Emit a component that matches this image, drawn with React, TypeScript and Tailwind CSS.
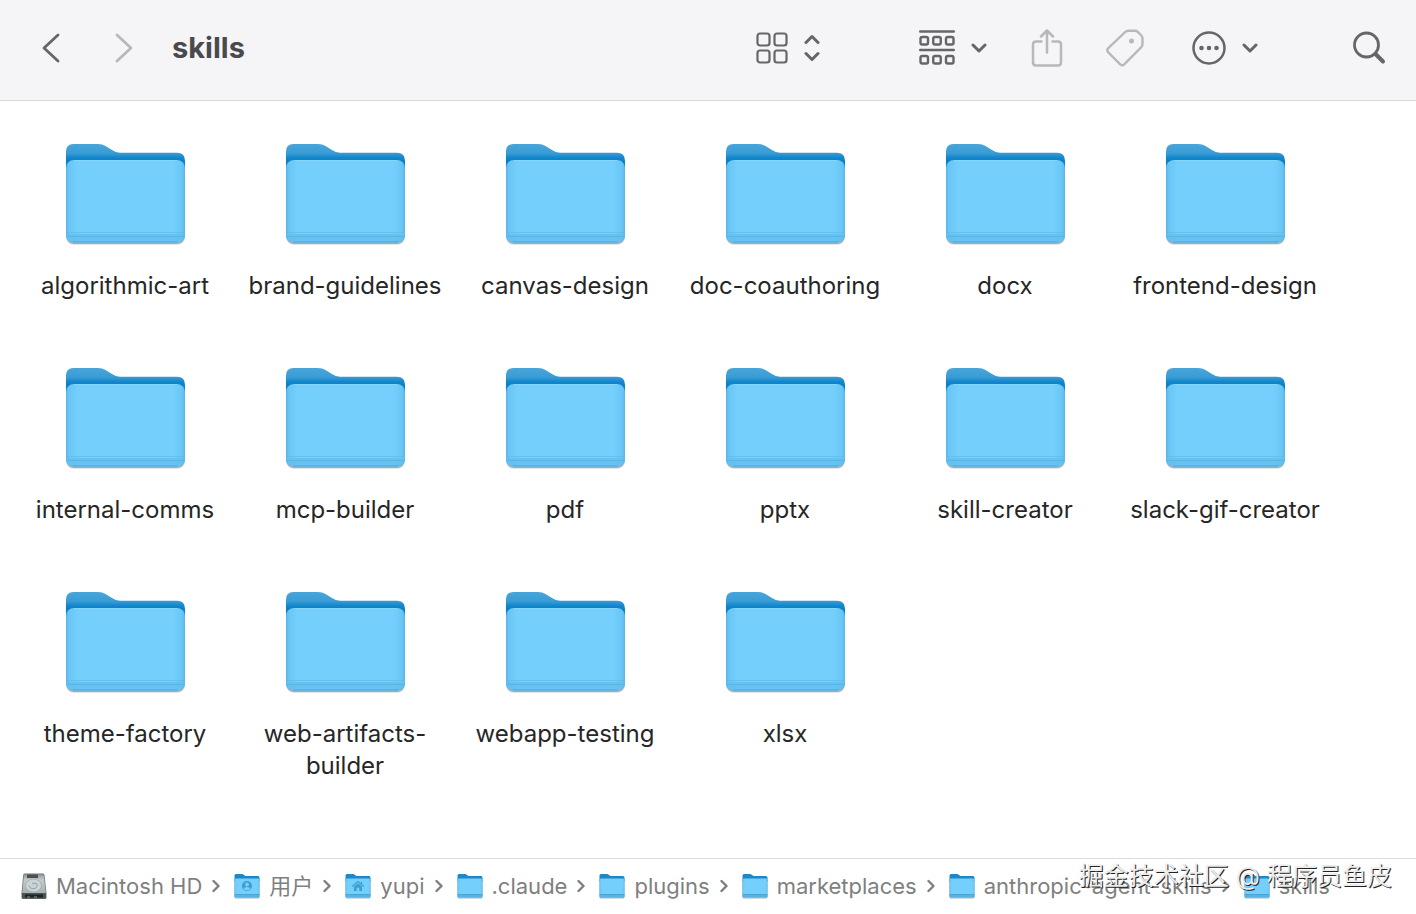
import { ReactNode } from "react";

const folders = [
  "algorithmic-art",
  "brand-guidelines",
  "canvas-design",
  "doc-coauthoring",
  "docx",
  "frontend-design",
  "internal-comms",
  "mcp-builder",
  "pdf",
  "pptx",
  "skill-creator",
  "slack-gif-creator",
  "theme-factory",
  "web-artifacts-builder",
  "webapp-testing",
  "xlsx",
];

type Crumb = { name: string; icon: "drive" | "users" | "home" | "folder" };

const path: Crumb[] = [
  { name: "Macintosh HD", icon: "drive" },
  { name: "用户", icon: "users" },
  { name: "yupi", icon: "home" },
  { name: ".claude", icon: "folder" },
  { name: "plugins", icon: "folder" },
  { name: "marketplaces", icon: "folder" },
  { name: "anthropic-agent-skills", icon: "folder" },
  { name: "skills", icon: "folder" },
];

function Gradients() {
  return (
    <svg className="absolute h-0 w-0" aria-hidden="true">
      <defs>
        <linearGradient id="back" x1="0" y1="0" x2="0" y2="18" gradientUnits="userSpaceOnUse">
          <stop offset="0" stopColor="#4aa6da" />
          <stop offset="0.55" stopColor="#3a9dd6" />
          <stop offset="0.8" stopColor="#1488cb" />
          <stop offset="1" stopColor="#0a80c6" />
        </linearGradient>
        <linearGradient id="sides" x1="0" y1="0" x2="1" y2="0">
          <stop offset="0" stopColor="#58b6e8" />
          <stop offset="0.025" stopColor="#6ac6f5" />
          <stop offset="0.1" stopColor="#74cffc" />
          <stop offset="0.9" stopColor="#74cffc" />
          <stop offset="0.975" stopColor="#6ac6f5" />
          <stop offset="1" stopColor="#58b6e8" />
        </linearGradient>
        <linearGradient id="drive" x1="0" y1="0" x2="0" y2="1">
          <stop offset="0" stopColor="#8d9294" />
          <stop offset="0.3" stopColor="#c3cbcd" />
          <stop offset="1" stopColor="#a7b0b2" />
        </linearGradient>
      </defs>
    </svg>
  );
}

function Folder() {
  return (
    <svg viewBox="2 0 122 106" className="h-[106px] w-[122px]" aria-hidden="true">
      <rect x="4" y="20" width="119" height="82" rx="8" fill="#000" opacity="0.1" />
      <rect x="4" y="20" width="119" height="81" rx="8" fill="#4a6a80" opacity="0.45" />
      <path
        d="M4 88V8.500Q4 1 11.500 1H36Q40.500 1 43.500 3L50 7Q54 9.800 58 9.800H115Q123 9.800 123 18V88Z"
        fill="url(#back)"
      />
      <rect x="4" y="17" width="119" height="82.500" rx="8" fill="url(#sides)" />
      <path d="M4 91H123V91.500Q123 99.500 115 99.500H12Q4 99.500 4 91.500Z" fill="#62bdec" opacity="0.75" />
      <path d="M5 89.500H122" stroke="#58b5e6" strokeWidth="1" opacity="0.5" />
      <path d="M5 93.500H122" stroke="#52afe1" strokeWidth="1" opacity="0.6" />
      <path d="M11 99H116" stroke="#46a1d2" strokeWidth="1" opacity="0.7" />
      <path d="M12 17.500H115" stroke="#8fdcff" strokeWidth="1" opacity="0.6" />
    </svg>
  );
}

function SmallFolder({ children }: { children?: ReactNode }) {
  return (
    <svg viewBox="0 0 26 26" className="h-[26px] w-[26px] shrink-0" aria-hidden="true">
      <rect x="0.500" y="6" width="25" height="19.500" rx="1.500" fill="#4a7590" opacity="0.5" />
      <path d="M0.500 8V2.500Q0.500 1 2 1H8.500L11.500 3H24Q25.500 3 25.500 4.500V8Z" fill="#1f88c4" />
      <rect x="0.500" y="5.500" width="25" height="19" rx="1.500" fill="url(#sides)" />
      <path d="M0.500 21H25.500V23Q25.500 24.500 24 24.500H2Q0.500 24.500 0.500 23Z" fill="#57b3e3" />
      <path d="M1 21.500H25" stroke="#4aa4d5" strokeWidth="1" />
      {children}
    </svg>
  );
}

function Drive() {
  return (
    <svg viewBox="0 0 26 26" className="h-[26px] w-[26px] shrink-0" aria-hidden="true">
      <path d="M3.500 0.500H22Q23.200 0.500 23.500 2L25.500 20V24.500Q25.500 26 24 26H2Q0.500 26 0.500 24.500V20L2.200 2Q2.400 0.500 3.500 0.500Z" fill="#6d7375" />
      <path d="M4 1.200H21.800Q22.600 1.200 22.800 2.200L24.800 20H1.200L3 2.200Q3.200 1.200 4 1.200Z" fill="url(#drive)" />
      <rect x="6" y="1.500" width="11" height="3.500" rx="0.500" fill="#4a4f52" />
      <ellipse cx="12.500" cy="12.500" rx="8" ry="6.500" fill="#cbd3d4" stroke="#a3adaf" strokeWidth="0.800" />
      <path d="M8 12.500Q9 16.500 14 15.500Q17 14 16 11Q13 9 11 11" fill="none" stroke="#8aa4ad" strokeWidth="1" />
      <path d="M1 20H25V24Q25 25.500 23.500 25.500H2.500Q1 25.500 1 24Z" fill="#4d5253" />
      <path d="M4 21.500H22V24.500H4Z" fill="#202325" />
      <path d="M6 24H9M13 24H16" stroke="#8b9294" strokeWidth="1" />
    </svg>
  );
}

function CrumbIcon({ icon }: { icon: Crumb["icon"] }) {
  if (icon === "drive") return <Drive />;
  if (icon === "users")
    return (
      <SmallFolder>
        <circle cx="13" cy="13" r="5" fill="#3d9ed4" />
        <circle cx="13" cy="11.500" r="1.900" fill="#79cff9" />
        <path d="M9.500 16Q10 14 13 14T16.500 16Q13 18.500 9.500 16Z" fill="#79cff9" />
      </SmallFolder>
    );
  if (icon === "home")
    return (
      <SmallFolder>
        <path d="M7 13.500L13 8.500L19 13.500M16.500 11V9" fill="none" stroke="#3d9ed4" strokeWidth="1.200" />
        <path d="M9 13.500L13 10.300L17 13.500V18H14.300V14.800H11.700V18H9Z" fill="#3d9ed4" />
      </SmallFolder>
    );
  return <SmallFolder />;
}

function Glyph({ className, viewBox, width = 2.5, children }: { className: string; viewBox: string; width?: number; children: ReactNode }) {
  return (
    <svg
      viewBox={viewBox}
      className={className}
      fill="none"
      stroke="currentColor"
      strokeWidth={width}
      strokeLinecap="round"
      strokeLinejoin="round"
      aria-hidden="true"
    >
      {children}
    </svg>
  );
}

function ChevronDown() {
  return (
    <Glyph viewBox="0 0 16 10" className="h-[10px] w-4" width={3}>
      <path d="M2 2L8 8L14 2" />
    </Glyph>
  );
}

function Toolbar() {
  return (
    <header className="flex h-[101px] shrink-0 items-center justify-between border-b border-[#d8d8db] bg-[#f5f5f7] pr-[30px] pb-[5px] pl-[41px] text-[#666668]">
      <div className="flex items-center">
        <button aria-label="Back">
          <Glyph viewBox="0 0 20 30" className="h-[30px] w-5" width={2.8}>
            <path d="M17 2L3 15L17 28" />
          </Glyph>
        </button>
        <button aria-label="Forward" disabled className="ml-[53px] text-[#b8b8ba]">
          <Glyph viewBox="0 0 20 30" className="h-[30px] w-5" width={2.8}>
            <path d="M3 2L17 15L3 28" />
          </Glyph>
        </button>
        <h1 className="ml-[38px] text-[29px] leading-9 font-bold text-[#4a4a4c]">skills</h1>
      </div>
      <div className="flex items-center">
        <button aria-label="View as icons" className="flex items-center gap-4">
          <Glyph viewBox="0 0 32 32" className="h-8 w-8" width={2.2}>
            <rect x="1.500" y="1.500" width="12" height="12" rx="2.500" />
            <rect x="18.500" y="1.500" width="12" height="12" rx="2.500" />
            <rect x="1.500" y="18.500" width="12" height="12" rx="2.500" />
            <rect x="18.500" y="18.500" width="12" height="12" rx="2.500" />
          </Glyph>
          <Glyph viewBox="0 0 16 28" className="h-7 w-4" width={3}>
            <path d="M2 8.500L8 2.500L14 8.500M2 19.500L8 25.500L14 19.500" />
          </Glyph>
        </button>
        <button aria-label="Group items" className="ml-[99px] flex items-center gap-4">
          <Glyph viewBox="0 0 36 36" className="h-9 w-9" width={2.4}>
            <path d="M1.200 1.500H34.800M1.200 20H34.800" />
            <rect x="1.500" y="7" width="7.500" height="7.500" rx="1.800" />
            <rect x="14.250" y="7" width="7.500" height="7.500" rx="1.800" />
            <rect x="27" y="7" width="7.500" height="7.500" rx="1.800" />
            <rect x="1.500" y="26" width="7.500" height="7.500" rx="1.800" />
            <rect x="14.250" y="26" width="7.500" height="7.500" rx="1.800" />
            <rect x="27" y="26" width="7.500" height="7.500" rx="1.800" />
          </Glyph>
          <ChevronDown />
        </button>
        <button aria-label="Share" disabled className="ml-[44px] text-[#b8b8ba]">
          <Glyph viewBox="0 0 32 38" className="h-[38px] w-8">
            <path d="M10.500 12.500H5Q2 12.500 2 15.500V33.500Q2 36.500 5 36.500H27Q30 36.500 30 33.500V15.500Q30 12.500 27 12.500H21.500M16 23.500V2M10 7.500L16 1.500L22 7.500" />
          </Glyph>
        </button>
        <button aria-label="Edit tags" disabled className="ml-[42px] text-[#b8b8ba]">
          <Glyph viewBox="0 0 40 40" className="h-10 w-10" width={2.4}>
            <path d="M3.300 20.200L20.200 4Q21.500 2.700 23.500 2.700H30Q31.500 2.700 32.500 3.700L36.300 7.500Q37.500 8.700 37.500 10.200V16Q37.500 18 36.300 19.200L19.200 36.300Q17.300 38 15.300 36.300L3.300 24.300Q1.300 22.300 3.300 20.200Z" />
            <circle cx="26.500" cy="13" r="1.300" fill="currentColor" />
          </Glyph>
        </button>
        <button aria-label="More actions" className="ml-[47px] flex items-center gap-4">
          <Glyph viewBox="0 0 34 34" className="h-[34px] w-[34px]" width={2.5}>
            <circle cx="17" cy="17" r="15.500" />
            <circle cx="9.500" cy="17" r="1.300" fill="currentColor" strokeWidth="2" />
            <circle cx="17" cy="17" r="1.300" fill="currentColor" strokeWidth="2" />
            <circle cx="24.500" cy="17" r="1.300" fill="currentColor" strokeWidth="2" />
          </Glyph>
          <ChevronDown />
        </button>
        <button aria-label="Search" className="ml-[94px]">
          <Glyph viewBox="0 0 34 34" className="h-[34px] w-[34px]" width={2.800}>
            <circle cx="14.500" cy="14" r="12" />
            <path d="M23.500 23L31 30.500" strokeWidth="4" />
          </Glyph>
        </button>
      </div>
    </header>
  );
}

export default function App() {
  return (
    <div className="flex min-h-screen flex-col bg-white font-['Inter','Noto_Sans_CJK_SC',sans-serif]">
      <Gradients />
      <Toolbar />
      <main className="flex-1 px-[15px] pt-[42px]">
        <ul className="grid grid-cols-[repeat(auto-fill,220px)]">
          {folders.map((name) => (
            <li key={name} className="flex h-56 flex-col items-center">
              <Folder />
              <span className="mt-[21px] max-w-[200px] text-center text-2xl leading-8 text-[#262626]">{name}</span>
            </li>
          ))}
        </ul>
      </main>
      <footer className="relative flex h-14 shrink-0 items-center border-t border-[#dcdcdc] bg-white pb-[2px] pl-[21px]">
        <nav aria-label="Path">
          <ol className="flex items-center text-[22px] leading-7 text-[#7f7f7f]">
            {path.map((crumb, i) => (
              <li key={crumb.name} className="flex items-center whitespace-nowrap">
                <CrumbIcon icon={crumb.icon} />
                <a href="#" className="ml-[9px]">{crumb.name}</a>
                {i < path.length - 1 && (
                  <Glyph viewBox="0 0 8 14" className="mr-[14px] ml-[10px] h-[14px] w-2" width={2.4}>
                    <path d="M1.500 2L6.500 7L1.500 12" />
                  </Glyph>
                )}
              </li>
            ))}
          </ol>
        </nav>
        <p className="absolute right-[24px] bottom-[20px] text-[25px] leading-9 whitespace-nowrap text-[#ececec] [text-shadow:1px_1px_0_#222]">
          掘金技术社区 @ 程序员鱼皮
        </p>
      </footer>
    </div>
  );
}
